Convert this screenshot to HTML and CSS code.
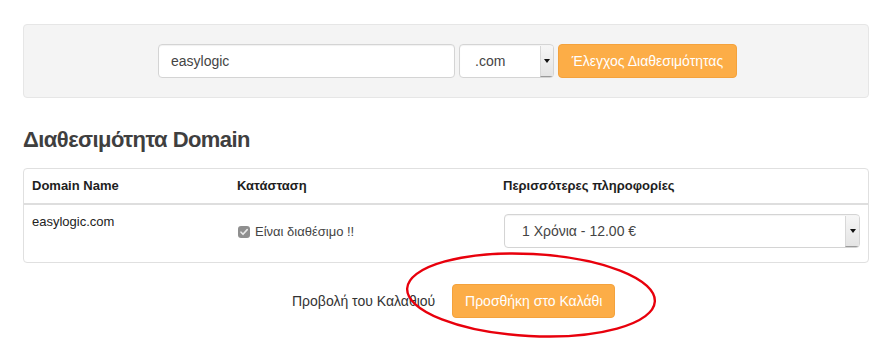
FILE: index.html
```html
<!DOCTYPE html>
<html lang="el">
<head>
<meta charset="utf-8">
<title>Διαθεσιμότητα Domain</title>
<link rel="stylesheet" href="styles.css">
</head>
<body>
<div class="page">
  <div class="well">
    <form class="search">
      <input class="field" type="text" value="easylogic">
      <span class="select tld"><span class="select-text">.com</span><span class="select-arrow"><span class="caret"></span></span></span>
      <button class="btn btn-check" type="button">Έλεγχος Διαθεσιμότητας</button>
    </form>
  </div>

  <h3 class="title">Διαθεσιμότητα Domain</h3>

  <div class="panel">
    <table class="results">
      <colgroup><col class="c1"><col class="c2"><col class="c3"></colgroup>
      <thead>
        <tr><th>Domain Name</th><th>Κατάσταση</th><th>Περισσότερες πληροφορίες</th></tr>
      </thead>
      <tbody>
        <tr>
          <td>easylogic.com</td>
          <td><div class="status"><span class="check"><svg width="12" height="12" viewBox="0 0 12 12"><path d="M3 6.2 L5 8.3 L9.2 3.6" fill="none" stroke="#e9e9e9" stroke-width="1.6" stroke-linecap="round" stroke-linejoin="round"/></svg></span><span>Είναι διαθέσιμο !!</span></div></td>
          <td class="opt"><span class="select period"><span class="select-text">1 Χρόνια - 12.00 €</span><span class="select-arrow"><span class="caret"></span></span></span></td>
        </tr>
      </tbody>
    </table>
  </div>

  <div class="actions">
    <a class="view-cart" href="#">Προβολή του Καλαθιού</a>
    <button class="btn btn-add" type="button">Προσθήκη στο Καλάθι</button>
  </div>

  <svg class="highlight" width="875" height="340" viewBox="0 0 875 340"><ellipse cx="531" cy="295" rx="124" ry="41" transform="rotate(3 531 295)" fill="none" stroke="#e8000c" stroke-width="2.4"/></svg>
</div>
</body>
</html>
```
FILE: styles.css
```css
* { box-sizing: border-box; }
html, body { margin: 0; padding: 0; background: #fff; }
body {
  font-family: "Liberation Sans", Arial, sans-serif;
  font-size: 14px;
  color: #333;
}
.page {
  position: relative;
  width: 875px;
  height: 340px;
  padding: 24px 0 0 23px;
  display: flex;
  flex-direction: column;
  align-items: flex-start;
}
.well {
  width: 846px;
  background: #f4f4f4;
  border: 1px solid #e6e6e6;
  border-radius: 4px;
  padding: 19px;
}
.search {
  margin: 0;
  display: flex;
  justify-content: center;
  gap: 4px;
  padding-left: 3px;
}
.field {
  width: 297px;
  height: 34px;
  border: 1px solid #d4d4d4;
  border-radius: 4px;
  box-shadow: inset 0 1px 1px rgba(0,0,0,.06);
  padding: 0 12px;
  font: 14px "Liberation Sans", Arial, sans-serif;
  color: #444;
  background: #fff;
}
.select {
  display: flex;
  align-items: stretch;
  height: 34px;
  border: 1px solid #d4d4d4;
  border-radius: 4px;
  background: #fff;
  box-shadow: inset 0 1px 1px rgba(0,0,0,.05);
  overflow: hidden;
  color: #444;
}
.select-text {
  flex: 1;
  display: flex;
  align-items: center;
  white-space: nowrap;
}
.select-arrow {
  width: 13px;
  margin: 1px 0 0 0;
  background: linear-gradient(#f6f6f6, #e4e4e4);
  border-left: 1px solid #d8d8d8;
  border-bottom: 1px solid #9a9a9a;
  display: flex;
  align-items: center;
  justify-content: center;
}
.caret {
  width: 0; height: 0;
  border-left: 3px solid transparent;
  border-right: 3px solid transparent;
  border-top: 4px solid #111;
}
.tld { width: 95px; }
.tld .select-text { padding-left: 15px; }
.btn {
  height: 34px;
  border: 1px solid #f4a23c;
  border-radius: 4px;
  background: #fcad47;
  color: #fff;
  font: 14px "Liberation Sans", Arial, sans-serif;
  padding: 0;
  white-space: nowrap;
  cursor: pointer;
}
.btn-check { width: 179px; }
.title {
  margin: 29px 0 15px 0;
  font-size: 22px;
  letter-spacing: -0.55px;
  line-height: 26px;
  font-weight: bold;
  color: #3f3f3f;
}
.panel {
  width: 846px;
  border: 1px solid #e0e0e0;
  border-radius: 4px;
}
.results {
  width: 844px;
  border-collapse: collapse;
  table-layout: fixed;
  font-size: 13px;
}
.c1 { width: 205px; }
.c2 { width: 266px; }
.c3 { width: 373px; }
.results th {
  text-align: left;
  font-weight: bold;
  color: #1e1e1e;
  padding: 8px;
  line-height: 18px;
  border-bottom: 2px solid #dedede;
}
.results td {
  vertical-align: top;
  padding: 8px;
  line-height: 18px;
  color: #222;
}
.status {
  margin-top: 10px;
  display: flex;
  align-items: center;
  gap: 5px;
  padding-left: 1px;
  color: #444;
}
.check {
  width: 12px;
  height: 12px;
  border-radius: 3px;
  background: #8f8f8f;
  display: flex;
}
.results td.opt { padding: 9px 8px 14px 9px; }
.period { width: 356px; font-size: 14px; }
.period .select-text { padding-left: 17px; }
.period .select-arrow { width: 14px; }
.actions {
  margin-top: 21px;
  display: flex;
  align-items: center;
  gap: 17px;
  padding-left: 269px;
}
.view-cart {
  color: #333;
  text-decoration: none;
  font-size: 14px;
}
.btn-add { width: 163px; }
.highlight {
  position: absolute;
  left: 0;
  top: 0;
  pointer-events: none;
}
```
